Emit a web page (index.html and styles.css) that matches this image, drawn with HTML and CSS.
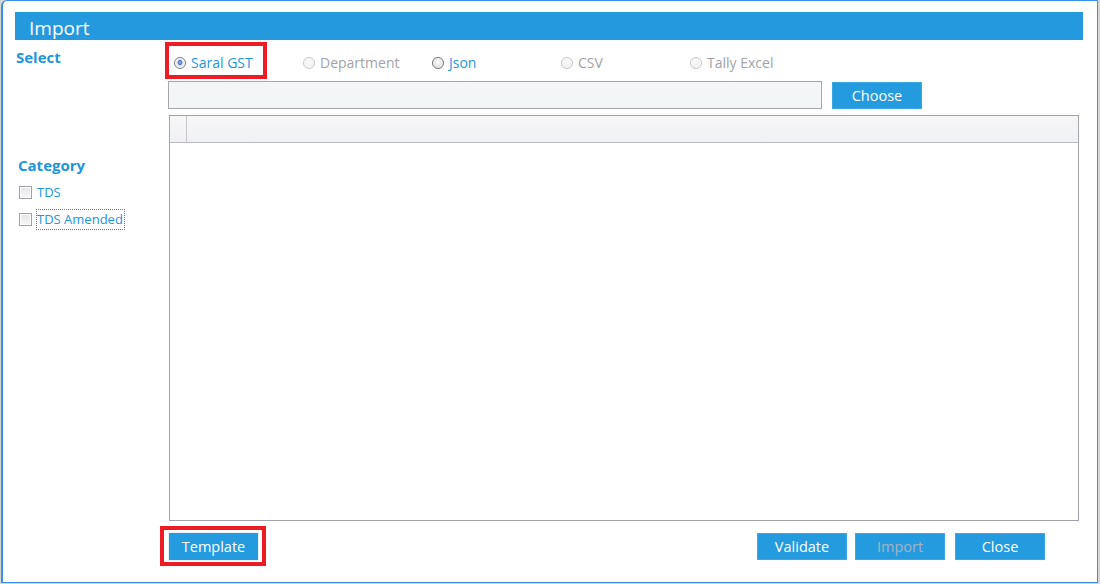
FILE: index.html
```html
<!DOCTYPE html>
<html lang="en">
<head>
    <meta charset="UTF-8">
    <title>Import</title>
    <link rel="stylesheet" href="styles.css">
</head>
<body>
    <div class="window">
        <div class="titlebar">Import</div>
        <div class="content">
            <div class="side">
                <div class="heading">Select</div>
                <div class="heading category">Category</div>
                <div class="checks">
                    <label class="check"><span class="box"></span><span class="check-text">TDS</span></label>
                    <label class="check"><span class="box"></span><span class="check-text focused">TDS Amended</span></label>
                </div>
            </div>

            <div class="main">
                <div class="radios">
                    <div class="opt">
                        <span class="mark">
                            <span class="radio checked"></span>
                            <span class="opt-text">Saral GST</span>
                        </span>
                    </div>
                    <div class="opt disabled"><span class="radio"></span><span class="opt-text">Department</span></div>
                    <div class="opt"><span class="radio enabled"></span><span class="opt-text">Json</span></div>
                    <div class="opt disabled"><span class="radio"></span><span class="opt-text">CSV</span></div>
                    <div class="opt disabled"><span class="radio"></span><span class="opt-text">Tally Excel</span></div>
                </div>

                <div class="file-row">
                    <div class="file-input"></div>
                    <button class="btn choose">Choose</button>
                </div>

                <div class="grid">
                    <div class="grid-head">
                        <div class="grid-corner"></div>
                        <div class="grid-col"></div>
                    </div>
                </div>

                <div class="actions">
                    <span class="mark-btn"><button class="btn template">Template</button></span>
                    <div class="right-actions">
                        <button class="btn">Validate</button>
                        <button class="btn disabled-btn">Import</button>
                        <button class="btn close">Close</button>
                    </div>
                </div>
            </div>
        </div>
    </div>
</body>
</html>
```

FILE: styles.css
```css
body {
    margin: 0;
    background-color: #d6d6d6;
    font-family: "Open Sans", "Noto Sans", sans-serif;
}
.window {
    box-sizing: border-box;
    width: 1097px;
    height: 583px;
    margin-left: 1px;
    padding: 11px 14px 0 12px;
    background-color: #fff;
    border: 1px solid #3a90e8;
    border-left-width: 2px;
    border-top-left-radius: 6px;
}
.titlebar {
    height: 28px;
    line-height: 33px;
    overflow: hidden;
    padding-left: 14px;
    background-color: #2499dd;
    color: #fff;
    font-size: 19px;
}
.content {
    display: flex;
}
.side {
    width: 153px;
    flex-shrink: 0;
}
.heading {
    margin-top: 7px;
    padding-left: 1px;
    line-height: 20px;
    font-size: 15px;
    font-weight: bold;
    color: #2196dc;
}
.heading.category {
    margin-top: 88px;
    padding-left: 3px;
}
.checks {
    padding-top: 4px;
}
.check {
    display: flex;
    align-items: center;
    height: 27px;
    padding-left: 4px;
    font-size: 13px;
    color: #2196dc;
}
.box {
    box-sizing: border-box;
    width: 13px;
    height: 13px;
    margin-right: 4px;
    border: 1px solid #a0a0a6;
    background: linear-gradient(#e6e6e8, #f7f7f8);
    box-shadow: inset 0 0 0 1px #fff;
}
.check-text {
    border: 1px dotted transparent;
    padding: 0 1px 1px 0;
}
.check-text.focused {
    border-color: #2a8fd8;
}
.main {
    flex: 1;
    margin-right: 4px;
}
.radios {
    display: flex;
    height: 20px;
    padding: 13px 0 8px;
}
.opt {
    display: flex;
    align-items: center;
    width: 129px;
    padding-left: 6px;
    box-sizing: border-box;
    font-size: 14px;
    line-height: 20px;
    color: #2196dc;
}
.opt.disabled {
    color: #a2a2a6;
}
.mark {
    display: flex;
    align-items: center;
    border: 4px solid #ed1c24;
    padding: 7px 10px 2px 5px;
    margin: -11px -14px -6px -9px;
}
.radio {
    box-sizing: border-box;
    width: 12px;
    height: 12px;
    margin-right: 5px;
    border-radius: 50%;
    border: 1px solid #c6c6ca;
    background: radial-gradient(circle at 50% 40%, #fdfdfd 0, #ececee 70%);
    box-shadow: inset 0 0 0 1px #fff;
}
.radio.enabled {
    border-color: #6e6e72;
    background: radial-gradient(circle at 50% 40%, #fff 0, #d8d8dc 75%);
}
.radio.checked {
    border-color: #7c7c82;
    background: radial-gradient(circle at 50% 45%, #9ec4f4 0, #3d70c8 28%, #dfe0e6 36%, #f2f2f4 80%);
}
.file-row {
    display: flex;
    align-items: flex-end;
    gap: 10px;
}
.file-input {
    box-sizing: border-box;
    width: 654px;
    height: 28px;
    background-color: #f4f5f7;
    border: 1px solid #a6a6aa;
}
.btn {
    box-sizing: border-box;
    width: 90px;
    height: 27px;
    padding: 0;
    background-color: #249bde;
    color: #fff;
    border: 1px solid #3aa7e6;
    font-family: "Open Sans", "Noto Sans", sans-serif;
    font-size: 14.5px;
    cursor: pointer;
}
.grid {
    box-sizing: border-box;
    height: 406px;
    margin: 6px 0 0 1px;
    border: 1px solid #a2a2ac;
}
.grid-head {
    display: flex;
    height: 26px;
    background: linear-gradient(#f6f6f7, #f0f1f3);
    border-bottom: 1px solid #babac2;
}
.grid-corner {
    width: 16px;
    border-right: 1px solid #c6c6cc;
}
.actions {
    display: flex;
    align-items: center;
    justify-content: space-between;
    height: 40px;
    margin-top: 5px;
    margin-right: 34px;
}
.mark-btn {
    display: flex;
    border: 4px solid #ed1c24;
    padding: 2px 3px 1px 4px;
    margin-left: -8px;
}
.btn.template {
    width: 91px;
    height: 29px;
    border: 1px solid #e6f3fb;
}
.right-actions {
    display: flex;
    gap: 8px;
}
.btn.close {
    margin-left: 2px;
}
.btn.disabled-btn {
    color: #a6b4c2;
}
```
